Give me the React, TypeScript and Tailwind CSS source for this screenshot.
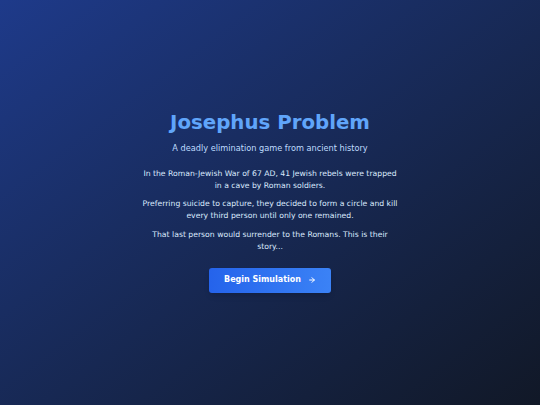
import React from 'react';

const App: React.FC = () => {
  return (
    <div
      className="w-full h-screen pb-[3px] flex items-center justify-center bg-gradient-to-br from-[#1e3a8a] to-[#111827]"
      style={{ fontFamily: '"DejaVu Sans", Verdana, sans-serif' }}
    >
      <div className="flex flex-col items-center text-center">
        <h1 className="text-[19.8px] leading-[26px] font-bold text-[#60a5fa]">Josephus Problem</h1>
        <p className="mt-[6px] text-[8.2px] leading-[13px] text-[#bfdbfe]">A deadly elimination game from ancient history</p>

        <div className="mt-[13px] w-[255px] flex flex-col gap-[6.5px] text-[7.7px] leading-[12px] text-[#dbeafe]">
          <p>In the Roman-Jewish War of 67 AD, 41 Jewish rebels were trapped in a cave by Roman soldiers.</p>
          <p>Preferring suicide to capture, they decided to form a circle and kill every third person until only one remained.</p>
          <p>That last person would surrender to the Romans. This is their story...</p>
        </div>

        <button
          type="button"
          className="mt-[15px] h-[25px] w-[122px] flex items-center justify-center gap-[7px] rounded-[3px] bg-gradient-to-r from-[#2563eb] to-[#3b82f6] text-white text-[8px] font-bold shadow-md"
        >
          Begin Simulation
          <svg width="8" height="8" viewBox="0 0 24 24" fill="none" stroke="currentColor" strokeWidth="3" strokeLinecap="round" strokeLinejoin="round">
            <path d="M5 12h14" />
            <path d="m12 5 7 7-7 7" />
          </svg>
        </button>
      </div>
    </div>
  );
};

export default App;
